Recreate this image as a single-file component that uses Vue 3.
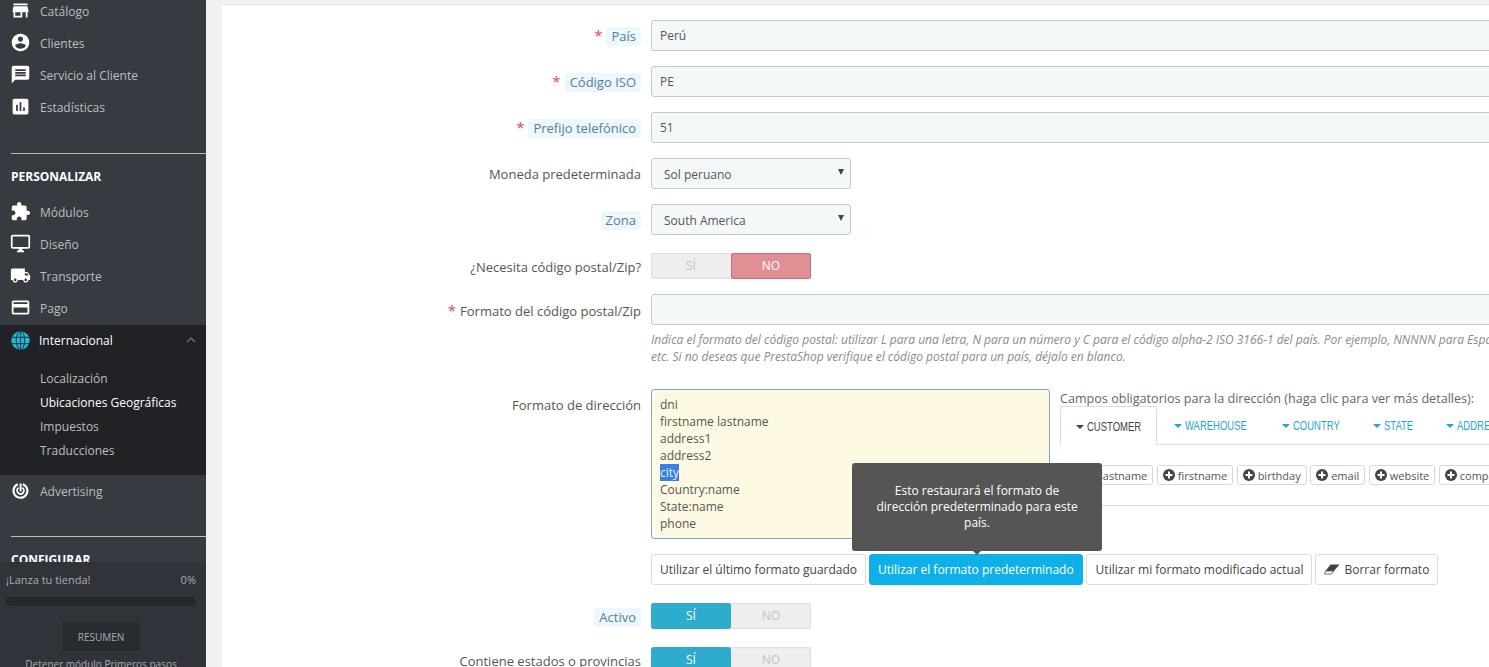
<script setup>
const icons = {
  store: 'M20 4H4v2h16V4zm1 10v-2l-1-5H4l-1 5v2h1v6h10v-6h4v6h2v-6h1zm-9 4H6v-4h6v4z',
  account: 'M12 2C6.48 2 2 6.48 2 12s4.48 10 10 10 10-4.48 10-10S17.52 2 12 2zm0 3c1.66 0 3 1.34 3 3s-1.34 3-3 3-3-1.34-3-3 1.34-3 3-3zm0 14.2c-2.5 0-4.71-1.28-6-3.22.03-1.99 4-3.08 6-3.08 1.99 0 5.97 1.09 6 3.08-1.29 1.94-3.5 3.22-6 3.22z',
  message: 'M20 2H4c-1.1 0-1.99.9-1.99 2L2 22l4-4h14c1.1 0 2-.9 2-2V4c0-1.1-.9-2-2-2zm-2 12H6v-2h12v2zm0-3H6V9h12v2zm0-3H6V6h12v2z',
  stats: 'M19 3H5c-1.1 0-2 .9-2 2v14c0 1.1.9 2 2 2h14c1.1 0 2-.9 2-2V5c0-1.1-.9-2-2-2zM9 17H7v-7h2v7zm4 0h-2V7h2v10zm4 0h-2v-4h2v4z',
  extension: 'M20.5 11H19V7c0-1.1-.9-2-2-2h-4V3.5C13 2.12 11.88 1 10.5 1S8 2.12 8 3.5V5H4c-1.1 0-1.99.9-1.99 2v3.8H3.5c1.49 0 2.7 1.21 2.7 2.7s-1.21 2.7-2.7 2.7H2V20c0 1.1.9 2 2 2h3.8v-1.5c0-1.49 1.21-2.7 2.7-2.7 1.49 0 2.7 1.21 2.7 2.7V22H17c1.1 0 2-.9 2-2v-4h1.5c1.38 0 2.5-1.12 2.5-2.5S21.88 11 20.5 11z',
  desktop: 'M21 2H3c-1.1 0-2 .9-2 2v12c0 1.1.9 2 2 2h7v2H8v2h8v-2h-2v-2h7c1.1 0 2-.9 2-2V4c0-1.1-.9-2-2-2zm0 14H3V4h18v12z',
  shipping: 'M20 8h-3V4H3c-1.1 0-2 .9-2 2v11h2c0 1.66 1.34 3 3 3s3-1.34 3-3h6c0 1.66 1.34 3 3 3s3-1.34 3-3h2v-5l-3-4zM6 18.5c-.83 0-1.5-.67-1.5-1.5s.67-1.5 1.5-1.5 1.5.67 1.5 1.5-.67 1.5-1.5 1.5zm13.5-9l1.96 2.5H17V9.5h2.5zm-1.5 9c-.83 0-1.5-.67-1.5-1.5s.67-1.5 1.5-1.5 1.5.67 1.5 1.5-.67 1.5-1.5 1.5z',
  payment: 'M20 4H4c-1.11 0-1.99.89-1.99 2L2 18c0 1.11.89 2 2 2h16c1.11 0 2-.89 2-2V6c0-1.11-.89-2-2-2zm0 14H4v-6h16v6zm0-10H4V6h16v2z'
}
const topItems = [
  { t: 'Catálogo', i: icons.store },
  { t: 'Clientes', i: icons.account },
  { t: 'Servicio al Cliente', i: icons.message },
  { t: 'Estadísticas', i: icons.stats }
]
const customItems = [
  { t: 'Módulos', i: icons.extension },
  { t: 'Diseño', i: icons.desktop },
  { t: 'Transporte', i: icons.shipping },
  { t: 'Pago', i: icons.payment }
]
const subItems = [
  { t: 'Localización' },
  { t: 'Ubicaciones Geográficas', on: true },
  { t: 'Impuestos' },
  { t: 'Traducciones' }
]
const tabs = [
  { t: 'WAREHOUSE', w: 63 },
  { t: 'COUNTRY', w: 46 },
  { t: 'STATE', w: 28 },
  { t: 'ADDRESS', w: 48 }
]
const chips = ['lastname', 'firstname', 'birthday', 'email', 'website', 'company']
</script>

<template>
  <div class="page">
    <aside class="side">
      <nav class="nav">
        <a v-for="m in topItems" :key="m.t" class="item">
          <svg class="ico" viewBox="0 0 24 24"><path :d="m.i" /></svg>{{ m.t }}
        </a>
        <div class="rule first"></div>
        <div class="section">PERSONALIZAR</div>
        <a v-for="m in customItems" :key="m.t" class="item">
          <svg class="ico" viewBox="0 0 24 24"><path :d="m.i" /></svg>{{ m.t }}
        </a>
        <div class="open">
          <a class="item head">
            <svg class="ico" viewBox="0 0 24 24">
              <circle cx="12" cy="12" r="10.5" fill="#25b9d7" />
              <g fill="none" stroke="#1d4a57" stroke-width="1.3">
                <ellipse cx="12" cy="12" rx="4.8" ry="10.5" />
                <path d="M12 1.5v21M2 8.5h20M2 15.5h20" />
              </g>
            </svg>Internacional
            <svg class="chev" viewBox="0 0 24 24"><path d="M7.41 15.41L12 10.83l4.59 4.58L18 14l-6-6-6 6z" /></svg>
          </a>
          <a v-for="s in subItems" :key="s.t" class="sub" :class="{ on: s.on }">{{ s.t }}</a>
        </div>
        <a class="item">
          <svg class="ico" viewBox="0 0 24 24">
            <path d="M15 3.6a9.2 9.2 0 1 1-6.4.1l.8 2.4a6.7 6.7 0 1 0 4.8-.1z" />
            <path d="M14.6 8a4.9 4.9 0 1 1-5.4.1l1.2 1.7a2.8 2.8 0 1 0 3.1-.1z" />
            <rect x="11" y="4" width="2.2" height="9" />
          </svg>Advertising
        </a>
        <div class="rule second"></div>
        <div class="section">CONFIGURAR</div>
      </nav>
      <div class="launch">
        <div class="launch-top"><span>¡Lanza tu tienda!</span><span>0%</span></div>
        <div class="bar"></div>
        <button class="resume">RESUMEN</button>
        <div class="stop">Detener módulo Primeros pasos</div>
      </div>
    </aside>

    <main class="main">
      <div class="card">
        <div class="row">
          <label class="lab"><i>*</i><span class="hint">País</span></label>
          <div class="input">Perú</div>
        </div>
        <div class="row">
          <label class="lab"><i>*</i><span class="hint">Código ISO</span></label>
          <div class="input">PE</div>
        </div>
        <div class="row">
          <label class="lab"><i>*</i><span class="hint">Prefijo telefónico</span></label>
          <div class="input">51</div>
        </div>
        <div class="row">
          <label class="lab">Moneda predeterminada</label>
          <div class="input select">Sol peruano<b></b></div>
        </div>
        <div class="row">
          <label class="lab"><span class="hint">Zona</span></label>
          <div class="input select">South America<b></b></div>
        </div>
        <div class="row sw-row">
          <label class="lab">¿Necesita código postal/Zip?</label>
          <div class="switch"><span class="off">SÍ</span><span class="no">NO</span></div>
        </div>
        <div class="row help-row">
          <label class="lab"><i class="plain">*</i>Formato del código postal/Zip</label>
          <div class="field">
            <div class="input"></div>
            <p class="help">Indica el formato del código postal: utilizar L para una letra, N para un número y C para el código alpha-2 ISO 3166-1 del país. Por ejemplo, NNNNN para España, NNNNN-NNNN para EE. UU.,<br />etc. Si no deseas que PrestaShop verifique el código postal para un país, déjalo en blanco.</p>
          </div>
        </div>
        <div class="row addr-row">
          <label class="lab top">Formato de dirección</label>
          <div class="field">
            <div class="addr">
              <div class="area">dni<br />firstname lastname<br />address1<br />address2<br /><span class="sel">city</span><br />Country:name<br />State:name<br />phone</div>
              <div class="req">
                <div class="req-title">Campos obligatorios para la dirección (haga clic para ver más detalles):</div>
                <div class="tabs">
                  <span class="tab active"><em></em><span class="tab-t" :style="{ width: '53px' }"><u>CUSTOMER</u></span></span>
                  <span v-for="t in tabs" :key="t.t" class="tab"><em></em><span class="tab-t" :style="{ width: t.w + 'px' }"><u>{{ t.t }}</u></span></span>
                </div>
                <div class="chips">
                  <span v-for="c in chips" :key="c" class="chip">
                    <svg viewBox="0 0 12 12"><circle cx="6" cy="6" r="6" /><path d="M5 2.5h2V5h2.5v2H7v2.5H5V7H2.5V5H5z" fill="#fff" /></svg>{{ c }}
                  </span>
                </div>
              </div>
            </div>
            <div class="btns">
              <span class="btn">Utilizar el último formato guardado</span>
              <span class="btn primary">Utilizar el formato predeterminado
                <span class="tip">Esto restaurará el formato de dirección predeterminado para este país.</span>
              </span>
              <span class="btn wide">Utilizar mi formato modificado actual</span>
              <span class="btn">
                <svg class="eraser" viewBox="0 0 16 11"><path d="M6.5.5H15.5L10 7H1.5z" fill="#444" /><path d="M1.5 7H10L7.5 10H.5z" fill="none" stroke="#555" stroke-width=".8" /></svg>Borrar formato
              </span>
            </div>
          </div>
        </div>
        <div class="row sw-row">
          <label class="lab"><span class="hint">Activo</span></label>
          <div class="switch"><span class="yes">SÍ</span><span class="off">NO</span></div>
        </div>
        <div class="row sw-row">
          <label class="lab">Contiene estados o provincias</label>
          <div class="switch"><span class="yes">SÍ</span><span class="off">NO</span></div>
        </div>
      </div>
    </main>
  </div>
</template>

<style>
html, body { margin: 0; height: 100%; overflow: hidden; }
</style>

<style scoped>
.page {
  display: flex;
  width: 1489px;
  height: 667px;
  overflow: hidden;
  font-family: "Open Sans", sans-serif;
  font-size: 12px;
  color: #555;
  background: #eff1f2;
}
.side {
  flex: 0 0 206px;
  display: flex;
  flex-direction: column;
  background: #363a41;
  overflow: hidden;
}
.nav { flex: 1; min-height: 0; overflow: hidden; }
.nav > .item:first-child { margin-top: -5px; }
.item {
  position: relative;
  display: flex;
  align-items: center;
  height: 32px;
  padding-left: 40px;
  color: #bebebe;
  font-size: 12px;
}
.ico {
  position: absolute;
  left: 10px;
  top: 5px;
  width: 21px;
  height: 21px;
  fill: #fff;
}
.rule { height: 1px; margin-left: 11px; background: #bbbcc0; }
.rule.first { margin-top: 30px; }
.rule.second { margin-top: 29px; }
.section {
  height: 42px;
  padding: 14px 0 0 11px;
  box-sizing: border-box;
  color: #fff;
  font-size: 12px;
  font-weight: 700;
  line-height: 17px;
}
.open { background: #202226; height: 150px; margin-top: 1px; }
.item.head { height: 31px; color: #fff; padding-left: 39px; margin-bottom: 11px; }
.chev { position: absolute; right: 6px; top: 6px; width: 18px; height: 18px; fill: #6c6f75; }
.sub {
  display: block;
  height: 24px;
  line-height: 24px;
  padding-left: 40px;
  color: #bebebe;
  font-size: 12px;
}
.sub.on { color: #fff; }
.launch {
  flex: 0 0 105px;
  height: 105px;
  box-sizing: border-box;
  background: #30343a;
  padding: 10px 10px 0 6px;
  color: #a8abb0;
  font-size: 11px;
}
.launch-top { display: flex; justify-content: space-between; line-height: 16px; }
.bar { height: 9px; margin-top: 9px; border-radius: 5px; background: #24272c; }
.resume {
  display: block;
  width: 78px;
  height: 29px;
  margin: 16px 0 0 56px;
  border: 0;
  border-radius: 3px;
  background: #282b30;
  color: #a8abb0;
  font: 10px "Open Sans", sans-serif;
}
.stop { margin-top: 6px; text-align: center; white-space: nowrap; font-size: 10px; }

.main { flex: 1; min-width: 0; padding: 4px 0 0 16px; overflow: hidden; }
.card {
  height: 700px;
  width: 1400px;
  box-sizing: border-box;
  padding-top: 15px;
  background: #fff;
  border-top: 1px solid #dfe3e5;
}
.row { display: flex; align-items: center; margin-bottom: 15px; }
.lab {
  flex: 0 0 419px;
  box-sizing: border-box;
  padding-top: 1px;
  margin-right: 10px;
  display: flex;
  justify-content: flex-end;
  align-items: center;
  font-size: 13px;
  color: #555;
  white-space: nowrap;
}
.lab.top { align-self: flex-start; padding-top: 0; margin-top: 7px; }
.lab i { color: #e0455a; font-style: normal; font-size: 15px; margin-right: 4px; margin-top: -3px; }
.hint {
  margin-top: 1px;
  padding: 0 5px;
  line-height: 19px;
  border-radius: 3px;
  background: #eef7fb;
  color: #50809e;
}
.input {
  position: relative;
  flex: none;
  box-sizing: border-box;
  width: 900px;
  height: 31px;
  padding: 0 8px;
  line-height: 30px;
  border: 1px solid #bbcdd2;
  border-radius: 3px;
  background: #f5f8f9;
  color: #555;
  font-size: 12px;
}
.select { width: 200px; padding-left: 12px; line-height: 31px; }
.select b {
  position: absolute;
  right: 6px;
  top: 10px;
  border-left: 3px solid transparent;
  border-right: 3px solid transparent;
  border-top: 6px solid #444;
}
.sw-row { padding-top: 3px; }
.switch {
  display: flex;
  width: 160px;
  height: 26px;
  border-radius: 3px;
  background: #eee;
  box-shadow: inset 0 0 2px #bbb;
  font-size: 12px;
}
.switch span {
  flex: 0 0 80px;
  text-align: center;
  line-height: 26px;
  border-radius: 3px;
}
.off { color: #c4c4c4; }
.no { background: #e08f95; color: #fff; box-shadow: inset 0 0 0 1px #c07278; }
.yes { background: #2eacce; color: #fff; }
.help-row { align-items: flex-start; margin-bottom: 0; height: 95px; }
.help-row .lab { margin-top: 7px; }
.field { flex: none; width: 900px; }
.help {
  margin: 6px 0 0;
  font-size: 12px;
  line-height: 17px;
  font-style: italic;
  color: #8a8a8a;
  white-space: nowrap;
}
.addr-row { align-items: flex-start; margin-bottom: 15px; }
.addr { display: flex; align-items: flex-start; }
.area {
  flex: none;
  box-sizing: border-box;
  width: 399px;
  height: 150px;
  padding: 6px 8px;
  border: 1px solid #7da9c4;
  border-radius: 3px;
  background: #fef9e3;
  font-size: 12px;
  line-height: 17px;
  color: #555;
}
.sel { display: inline-block; background: #3b7fe0; color: #e6eefa; }
.req { flex: none; width: 500px; margin-left: 10px; }
.req-title { height: 17px; font-size: 12.6px; line-height: 19px; color: #666; white-space: nowrap; }
.tabs {
  display: flex;
  height: 39px;
  box-sizing: border-box;
  border-bottom: 1px solid #ddd;
  font-family: "Liberation Sans", sans-serif;
  font-size: 13px;
}
.tab {
  display: flex;
  align-items: center;
  color: #25a5cf;
  padding: 1px 17px 0;
  gap: 3px;
}
.tab em {
  flex: none;
  border-left: 4px solid transparent;
  border-right: 4px solid transparent;
  border-top: 4px solid currentColor;
}
.tab-t { display: block; flex: none; }
.tab-t u {
  display: inline-block;
  text-decoration: none;
  white-space: nowrap;
  transform: scaleX(.73);
  transform-origin: 0 50%;
}
.tab.active {
  flex: none;
  width: 97px;
  height: 39px;
  box-sizing: border-box;
  padding: 1px 0 0 15px;
  color: #444;
  background: #fff;
  border: 1px solid #ddd;
  border-bottom: 0;
  border-radius: 3px 3px 0 0;
}
.chips {
  display: flex;
  gap: 3.5px;
  height: 61px;
  box-sizing: border-box;
  padding: 20px 0 0 19px;
  border-bottom: 1px solid #ddd;
}
.chip {
  display: inline-flex;
  align-items: center;
  flex: none;
  height: 20px;
  box-sizing: border-box;
  padding: 0 5px;
  border: 1px solid #d8d8d8;
  border-radius: 3px;
  font-size: 11px;
  color: #555;
  white-space: nowrap;
}
.chip svg { width: 12px; height: 12px; margin-right: 3px; fill: #444; }
.btns { display: flex; gap: 3px; margin-top: 15px; }
.btn {
  position: relative;
  display: flex;
  align-items: center;
  flex: none;
  height: 31px;
  box-sizing: border-box;
  padding: 0 8px;
  border: 1px solid #dcdcdc;
  border-radius: 3px;
  background: #fff;
  font-size: 12px;
  color: #444;
  white-space: nowrap;
}
.btn.wide { padding-left: 9px; }
.primary { background: #0fb0e8; border-color: #0fb0e8; color: #fff; }
.eraser { width: 16px; height: 11px; margin-right: 4px; }
.tip {
  position: absolute;
  left: -18px;
  bottom: 33px;
  width: 250px;
  height: 88px;
  box-sizing: border-box;
  padding: 20px 20px 0;
  border-radius: 3px;
  background: #555;
  color: #fff;
  font-size: 12px;
  line-height: 16px;
  text-align: center;
  white-space: normal;
}
.tip::after {
  content: "";
  position: absolute;
  left: 50%;
  bottom: -4px;
  margin-left: -4px;
  border-left: 4px solid transparent;
  border-right: 4px solid transparent;
  border-top: 4px solid #555;
}
</style>
